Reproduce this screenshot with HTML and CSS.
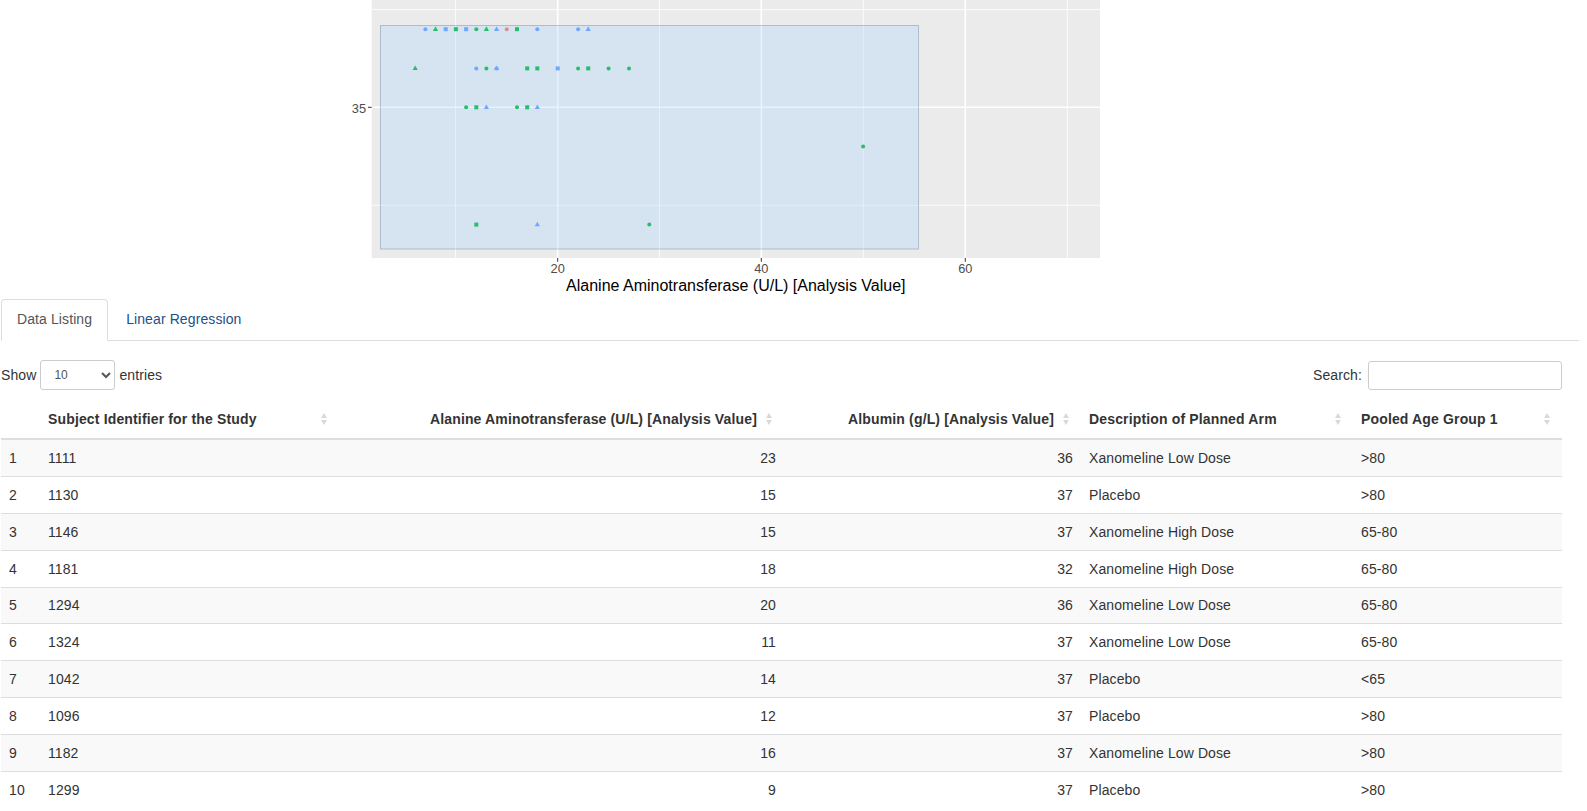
FILE: index.html
```html
<!DOCTYPE html>
<html>
<head>
<meta charset="utf-8">
<title>Data Listing</title>
<link rel="stylesheet" href="styles.css">
</head>
<body>
<div class="plot-output">
  <svg class="plot" width="1110" height="299" viewBox="0 0 1110 299" xmlns="http://www.w3.org/2000/svg">
    <defs>
      <circle id="c" r="2"/>
      <rect id="s" x="-2" y="-2" width="4" height="4"/>
      <polygon id="t" points="0,-2.9 -2.6,1.7 2.6,1.7"/>
    </defs>
    <rect class="panel" x="371.7" y="0" width="728.3" height="258"/>
    <g class="grid-minor">
      <line x1="455.5" y1="0" x2="455.5" y2="258"/>
      <line x1="659.5" y1="0" x2="659.5" y2="258"/>
      <line x1="863.3" y1="0" x2="863.3" y2="258"/>
      <line x1="1067.3" y1="0" x2="1067.3" y2="258"/>
      <line x1="371.7" y1="9.6" x2="1100" y2="9.6"/>
      <line x1="371.7" y1="205.3" x2="1100" y2="205.3"/>
    </g>
    <g class="grid-major">
      <line x1="557.7" y1="0" x2="557.7" y2="258"/>
      <line x1="761.3" y1="0" x2="761.3" y2="258"/>
      <line x1="965.3" y1="0" x2="965.3" y2="258"/>
      <line x1="371.7" y1="107.3" x2="1100" y2="107.3"/>
    </g>
    <g class="pts">
      <use href="#c" class="b" x="425.4" y="29.2"/>
      <use href="#t" class="g" x="435.5" y="29.2"/>
      <use href="#s" class="b" x="445.7" y="29.2"/>
      <use href="#s" class="g" x="455.9" y="29.2"/>
      <use href="#s" class="b" x="466.1" y="29.2"/>
      <use href="#c" class="g" x="476.3" y="29.2"/>
      <use href="#t" class="g" x="486.4" y="29.2"/>
      <use href="#t" class="b" x="496.6" y="29.2"/>
      <use href="#c" class="r" x="506.8" y="29.2"/>
      <use href="#s" class="g" x="517.0" y="29.2"/>
      <use href="#c" class="b" x="537.3" y="29.2"/>
      <use href="#c" class="b" x="578.1" y="29.2"/>
      <use href="#t" class="b" x="588.2" y="29.2"/>

      <use href="#t" class="g" x="415.2" y="68.4"/>
      <use href="#c" class="b" x="476.3" y="68.4"/>
      <use href="#c" class="g" x="486.4" y="68.4"/>
      <use href="#c" class="b" x="496.6" y="68.4"/>
      <use href="#t" class="b" x="496.6" y="68.4"/>
      <use href="#s" class="g" x="527.2" y="68.4"/>
      <use href="#s" class="g" x="537.3" y="68.4"/>
      <use href="#s" class="b" x="557.7" y="68.4"/>
      <use href="#c" class="g" x="578.1" y="68.4"/>
      <use href="#s" class="g" x="588.2" y="68.4"/>
      <use href="#c" class="g" x="608.6" y="68.4"/>
      <use href="#c" class="g" x="629.0" y="68.4"/>

      <use href="#c" class="g" x="466.1" y="107.3"/>
      <use href="#s" class="g" x="476.3" y="107.3"/>
      <use href="#t" class="b" x="486.4" y="107.3"/>
      <use href="#c" class="g" x="517.0" y="107.3"/>
      <use href="#s" class="g" x="527.2" y="107.3"/>
      <use href="#t" class="b" x="537.3" y="107.3"/>

      <use href="#c" class="g" x="863.1" y="146.5"/>

      <use href="#s" class="g" x="476.3" y="224.6"/>
      <use href="#t" class="b" x="537.3" y="224.6"/>
      <use href="#c" class="g" x="649.3" y="224.6"/>
    </g>
    <rect class="brush" x="380.5" y="25.5" width="538" height="223.5"/>
    <g class="ticks">
      <line x1="368" y1="107.3" x2="371.7" y2="107.3"/>
      <line x1="557.7" y1="258" x2="557.7" y2="261.7"/>
      <line x1="761.3" y1="258" x2="761.3" y2="261.7"/>
      <line x1="965.3" y1="258" x2="965.3" y2="261.7"/>
    </g>
    <g class="axis-text">
      <text x="366" y="112.6" text-anchor="end">35</text>
      <text x="557.7" y="272.8" text-anchor="middle">20</text>
      <text x="761.3" y="272.8" text-anchor="middle">40</text>
      <text x="965.3" y="272.8" text-anchor="middle">60</text>
    </g>
    <text class="axis-title" x="735.8" y="290.8" text-anchor="middle">Alanine Aminotransferase (U/L) [Analysis Value]</text>
  </svg>
</div>

<div class="tabbable">
  <ul class="nav-tabs">
    <li class="active"><a href="#">Data Listing</a></li>
    <li><a href="#">Linear Regression</a></li>
  </ul>
  <div class="tab-content">
    <div class="dt-wrapper">
      <div class="dt-top">
        <label class="dt-length">Show
          <select class="dt-select">
            <option>10</option>
            <option>25</option>
            <option>50</option>
            <option>100</option>
          </select>
          entries</label>
        <label class="dt-filter">Search:<input class="dt-search" type="search"></label>
      </div>
      <table class="dt-table">
        <colgroup>
          <col class="w-num">
          <col class="w-id">
          <col class="w-alt">
          <col class="w-alb">
          <col class="w-arm">
          <col class="w-age">
        </colgroup>
        <thead>
          <tr>
            <th class="plain"></th>
            <th class="sorting">Subject Identifier for the Study</th>
            <th class="sorting right">Alanine Aminotransferase (U/L) [Analysis Value]</th>
            <th class="sorting right">Albumin (g/L) [Analysis Value]</th>
            <th class="sorting">Description of Planned Arm</th>
            <th class="sorting">Pooled Age Group 1</th>
          </tr>
        </thead>
        <tbody>
          <tr><td>1</td><td>1111</td><td class="right">23</td><td class="right">36</td><td>Xanomeline Low Dose</td><td>&gt;80</td></tr>
          <tr><td>2</td><td>1130</td><td class="right">15</td><td class="right">37</td><td>Placebo</td><td>&gt;80</td></tr>
          <tr><td>3</td><td>1146</td><td class="right">15</td><td class="right">37</td><td>Xanomeline High Dose</td><td>65-80</td></tr>
          <tr><td>4</td><td>1181</td><td class="right">18</td><td class="right">32</td><td>Xanomeline High Dose</td><td>65-80</td></tr>
          <tr><td>5</td><td>1294</td><td class="right">20</td><td class="right">36</td><td>Xanomeline Low Dose</td><td>65-80</td></tr>
          <tr><td>6</td><td>1324</td><td class="right">11</td><td class="right">37</td><td>Xanomeline Low Dose</td><td>65-80</td></tr>
          <tr><td>7</td><td>1042</td><td class="right">14</td><td class="right">37</td><td>Placebo</td><td>&lt;65</td></tr>
          <tr><td>8</td><td>1096</td><td class="right">12</td><td class="right">37</td><td>Placebo</td><td>&gt;80</td></tr>
          <tr><td>9</td><td>1182</td><td class="right">16</td><td class="right">37</td><td>Xanomeline Low Dose</td><td>&gt;80</td></tr>
          <tr><td>10</td><td>1299</td><td class="right">9</td><td class="right">37</td><td>Placebo</td><td>&gt;80</td></tr>
        </tbody>
      </table>
    </div>
  </div>
</div>
</body>
</html>
```

FILE: styles.css
```css
html, body {
  margin: 0;
  padding: 0;
  background: #fff;
}

body {
  font-family: "Liberation Sans", Arial, Helvetica, sans-serif;
  font-size: 14px;
  line-height: 20px;
  letter-spacing: 0.1px;
  color: #333;
  overflow: hidden;
}

/* ---------- plot ---------- */
.plot-output {
  height: 299px;
}

.plot {
  display: block;
  letter-spacing: 0;
}

.panel {
  fill: #ebebeb;
}

.grid-minor line {
  stroke: #fff;
  stroke-width: 0.8;
}

.grid-major line {
  stroke: #fff;
  stroke-width: 1.6;
}

.pts .g { fill: #00BA38; }
.pts .b { fill: #619CFF; }
.pts .r { fill: #F8766D; }

.brush {
  fill: #99ccff;
  stroke: #003366;
  stroke-width: 1;
  opacity: 0.25;
}

.ticks line {
  stroke: #333;
  stroke-width: 1;
}

.axis-text text {
  font-family: "Liberation Sans", Arial, sans-serif;
  font-size: 12.8px;
  fill: #4d4d4d;
}

.axis-title {
  font-family: "Liberation Sans", Arial, sans-serif;
  font-size: 16px;
  fill: #000;
}

/* ---------- tabs ---------- */
.tabbable {
  margin: 0 8px 0 1px;
}

.nav-tabs {
  display: flex;
  list-style: none;
  margin: 0;
  padding: 0;
  border-bottom: 1px solid #ddd;
}

.nav-tabs li {
  margin-bottom: -1px;
}

.nav-tabs a {
  display: block;
  padding: 9px 15px 11px;
  line-height: 20px;
  margin-right: 2px;
  border: 1px solid transparent;
  border-radius: 4px 4px 0 0;
  color: #22508a;
  text-decoration: none;
}

.nav-tabs li.active a {
  color: #555;
  background: #fff;
  border-color: #ddd #ddd transparent;
}

/* ---------- datatable ---------- */
.tab-content {
  padding-right: 17px;
}

.dt-wrapper {
  padding-top: 19px;
}

.dt-top {
  display: flex;
  justify-content: space-between;
  align-items: center;
  height: 30px;
}

.dt-length,
.dt-filter {
  display: flex;
  align-items: center;
  font-weight: normal;
  white-space: nowrap;
}

.dt-select {
  width: 75px;
  height: 30px;
  margin: 0 4px 0 4px;
  padding: 5px 6px 5px 9px;
  font-family: "Liberation Sans", Arial, sans-serif;
  font-size: 12px;
  color: #555;
  background: #fff;
  border: 1px solid #ccc;
  border-radius: 3px;
  box-sizing: border-box;
}

.dt-search {
  width: 194px;
  height: 29px;
  margin-left: 6px;
  padding: 5px 10px;
  font-size: 12px;
  border: 1px solid #ccc;
  border-radius: 3px;
  box-sizing: border-box;
  background: #fff;
}

.dt-table {
  width: 100%;
  margin-top: 12px;
  border-collapse: collapse;
  table-layout: fixed;
}

.w-num { width: 39px; }
.w-id { width: 299px; }
.w-alt { width: 445px; }
.w-alb { width: 297px; }
.w-arm { width: 272px; }
.w-age { width: 209px; }

.dt-table th {
  position: relative;
  padding: 7px 8px 9px;
  line-height: 20px;
  text-align: left;
  font-weight: bold;
  letter-spacing: 0.15px;
  color: #333;
  border-bottom: 2px solid #ddd;
  white-space: nowrap;
}

.dt-table th.sorting {
  padding-right: 27px;
}

.dt-table th.right,
.dt-table td.right {
  text-align: right;
}

.dt-table th.sorting::before,
.dt-table th.sorting::after {
  content: "";
  position: absolute;
  right: 12.5px;
  width: 0;
  height: 0;
  border-left: 3px solid transparent;
  border-right: 3px solid transparent;
}

.dt-table th.sorting::before {
  top: 11px;
  border-bottom: 5px solid #d9d9d9;
}

.dt-table th.sorting::after {
  top: 18px;
  border-top: 5px solid #d9d9d9;
}

.dt-table td {
  padding: 7.94px 8px;
  line-height: 20px;
  border-top: 1px solid #ddd;
  white-space: nowrap;
}

.dt-table tbody tr:nth-child(odd) {
  background: #f9f9f9;
}
```
